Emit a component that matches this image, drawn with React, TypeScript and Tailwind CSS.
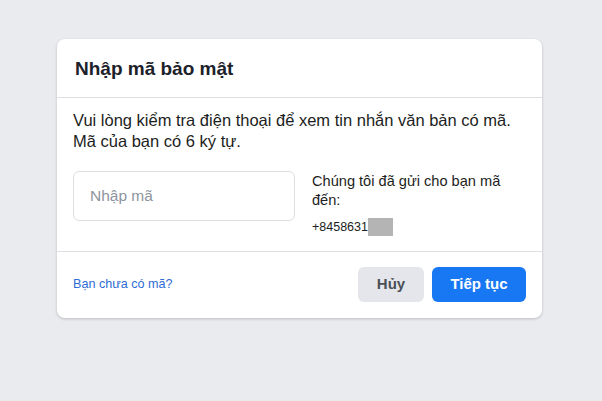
import React from 'react';

const App: React.FC = () => {
  return (
    <div className="min-h-screen w-full bg-[#e9ebee] pt-[39px] font-['Liberation_Sans',Arial,sans-serif]">
      <div className="ml-[57px] w-[485px] rounded-lg bg-white shadow-[0_1px_3px_rgba(0,0,0,0.2)]">
        {/* Header */}
        <div className="border-b border-[#dddfe2] px-[18px] pt-[19px] pb-[17px]">
          <h2 className="text-[19px] font-bold leading-[22px] text-[#1d2129]">Nhập mã bảo mật</h2>
        </div>

        {/* Body */}
        <div className="border-b border-[#dddfe2] px-[16px] pt-[12px] pb-[14px]">
          <p className="text-[16.5px] leading-[21px] text-[#1c1e21]">
            Vui lòng kiểm tra điện thoại để xem tin nhắn văn bản có mã.
            <br />
            Mã của bạn có 6 ký tự.
          </p>
          <div className="mt-[19px] flex gap-[17px]">
            <input
              type="text"
              placeholder="Nhập mã"
              className="h-[50px] w-[222px] rounded-md border border-[#dddfe2] px-[16px] text-[15.5px] text-[#1c1e21] outline-none placeholder:text-[#8d949e]"
            />
            <div className="w-[200px] pt-[1px]">
              <p className="text-[14.6px] leading-[19px] text-[#1c1e21]">Chúng tôi đã gửi cho bạn mã đến:</p>
              <div className="mt-[8px] flex items-center text-[12.5px] text-[#1c1e21]">
                <span>+8458631</span>
                <span className="h-[18px] w-[25px] bg-[#b4b4b4]" />
              </div>
            </div>
          </div>
        </div>

        {/* Footer */}
        <div className="flex items-center justify-between px-[16px] pt-[15px] pb-[16px]">
          <a href="#" className="text-[12.6px] text-[#2f6cd3]">Bạn chưa có mã?</a>
          <div className="flex gap-[8px]">
            <button className="h-[35px] w-[66px] rounded-md bg-[#e4e6eb] text-[15px] font-bold text-[#4b4f56]">Hủy</button>
            <button className="h-[35px] w-[94px] rounded-md bg-[#1877f2] text-[15px] font-bold text-white">Tiếp tục</button>
          </div>
        </div>
      </div>
    </div>
  );
};

export default App;
